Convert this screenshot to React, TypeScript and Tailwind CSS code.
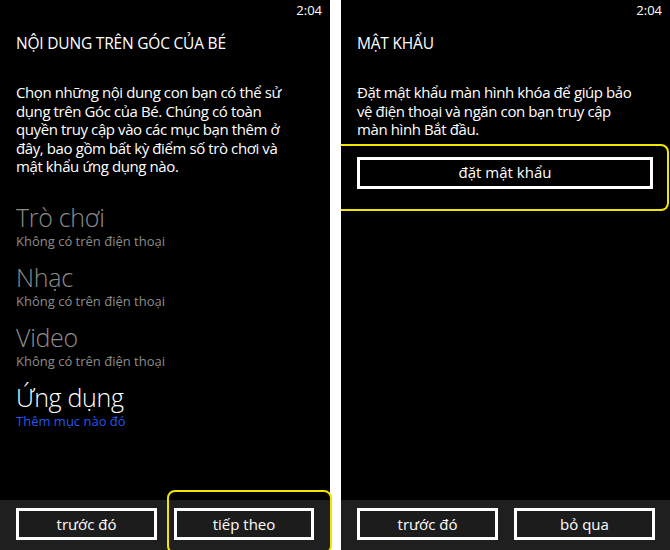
import React from "react";

const font = { fontFamily: '"Open Sans", "Noto Sans", sans-serif' };

function Item({ title, sub, active }: { title: string; sub: string; active?: boolean }) {
  return (
    <div className="flex flex-col h-[60px]">
      <div className={`text-[25px] leading-[32px] font-light tracking-[-0.3px] ${active ? "text-white" : "text-[#8c8c8c]"}`}>{title}</div>
      <div className={`text-[13px] leading-[16px] ${active ? "text-[#2355ee]" : "text-[#8c8c8c]"}`}>{sub}</div>
    </div>
  );
}

function Btn({ label, className = "" }: { label: string; className?: string }) {
  return (
    <div className={`h-[32px] border-[3px] border-white bg-[#1c1c1c] flex items-center justify-center text-white text-[15px] font-medium ${className}`}>
      {label}
    </div>
  );
}

export default function App() {
  return (
    <div className="w-[670px] h-[550px] bg-white flex overflow-hidden" style={font}>
      {/* Left phone */}
      <div className="relative w-[330px] h-full bg-black flex flex-col">
        <div className="h-[22px] flex items-center justify-end pr-2 text-white text-[13px]">2:04</div>
        <div className="mt-[10px] px-4 text-white text-[15.5px] leading-[22px] font-medium tracking-[-0.2px]">NỘI DUNG TRÊN GÓC CỦA BÉ</div>
        <div className="mt-[29px] ml-4 w-[279px] text-white text-[15px] leading-[18.5px] tracking-[-0.4px]">
          Chọn những nội dung con bạn có thể sử dụng trên Góc của Bé. Chúng có toàn quyền truy cập vào các mục bạn thêm ở đây, bao gồm bất kỳ điểm số trò chơi và mật khẩu ứng dụng nào.
        </div>
        <div className="mt-[25px] px-4 flex flex-col">
          <Item title="Trò chơi" sub="Không có trên điện thoại" />
          <Item title="Nhạc" sub="Không có trên điện thoại" />
          <Item title="Video" sub="Không có trên điện thoại" />
          <Item title="Ứng dụng" sub="Thêm mục nào đó" active />
        </div>
        <div className="flex-1" />
        <div className="h-[50px] bg-[#1f1f1f] flex items-start pt-[8px] pl-4 gap-[17px]">
          <Btn label="trước đó" className="w-[141px]" />
          <Btn label="tiếp theo" className="w-[140px]" />
        </div>
        <div className="absolute left-[167px] top-[490px] w-[165px] h-[64px] border-2 border-[#f2e500] rounded-[8px] pointer-events-none" />
      </div>
      {/* gap */}
      <div className="w-[11px]" />
      {/* Right phone */}
      <div className="relative w-[329px] h-full bg-black flex flex-col">
        <div className="h-[22px] flex items-center justify-end pr-2 text-white text-[13px]">2:04</div>
        <div className="mt-[10px] px-4 text-white text-[15.5px] leading-[22px] font-medium tracking-[-0.2px]">MẬT KHẨU</div>
        <div className="mt-[29px] ml-4 w-[279px] text-white text-[15px] leading-[18.5px] tracking-[-0.4px]">
          Đặt mật khẩu màn hình khóa để giúp bảo vệ điện thoại và ngăn con bạn truy cập màn hình Bắt đầu.
        </div>
        <div className="mt-[5px] mr-[1px] h-[67px] border-y-2 border-r-2 border-[#f2e500] rounded-r-[8px] pt-[11px] pl-4 pr-[14px]">
          <div className="h-[32px] border-[3px] border-white bg-black flex items-center justify-center text-white text-[15px] font-medium">
            đặt mật khẩu
          </div>
        </div>
        <div className="flex-1" />
        <div className="h-[50px] bg-[#1f1f1f] flex items-start pt-[8px] pl-4 gap-[16px]">
          <Btn label="trước đó" className="w-[141px]" />
          <Btn label="bỏ qua" className="w-[141px]" />
        </div>
      </div>
    </div>
  );
}
